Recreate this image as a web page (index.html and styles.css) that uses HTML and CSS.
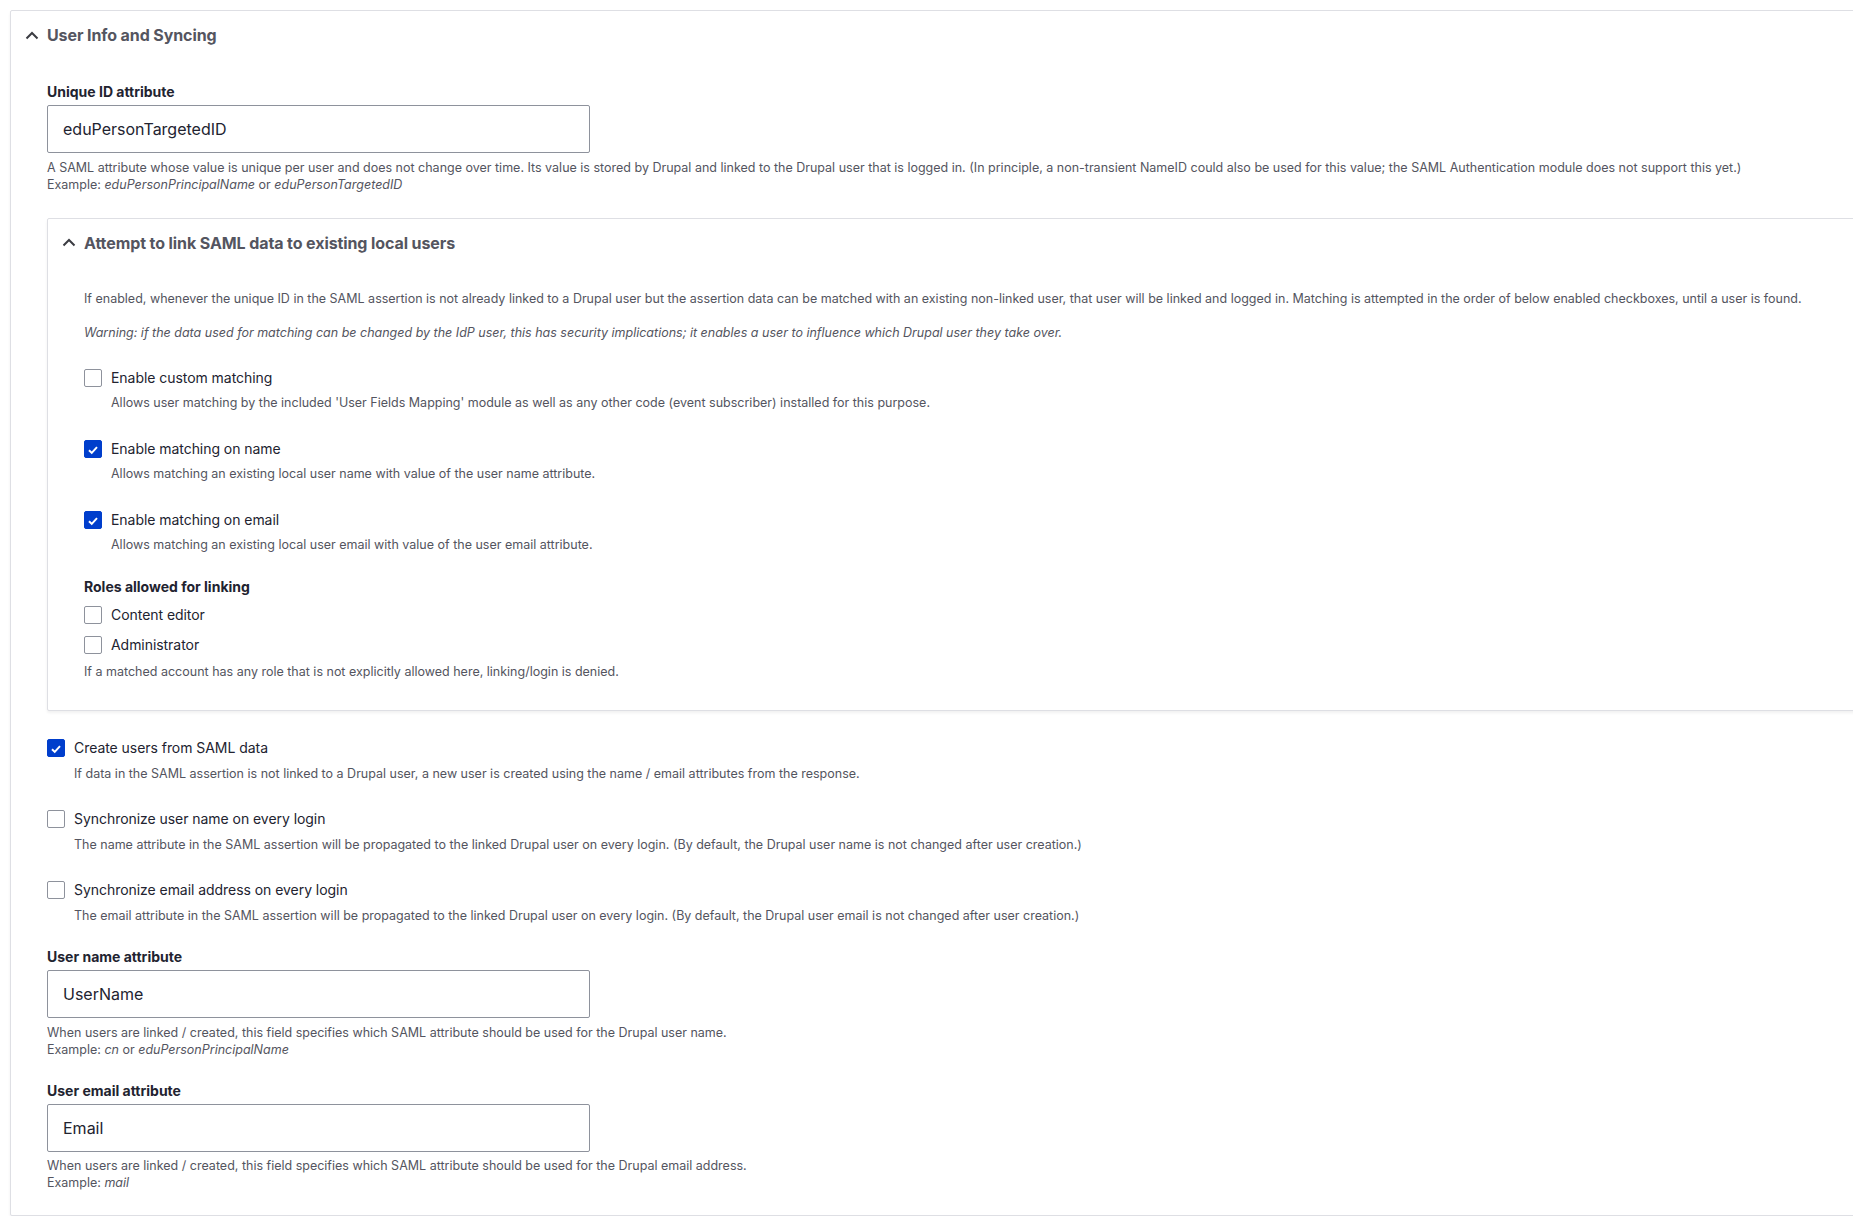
FILE: index.html
```html
<!DOCTYPE html>
<html lang="en">
<head>
<meta charset="utf-8">
<title>User Info and Syncing</title>
<link rel="stylesheet" href="styles.css">
</head>
<body>
<div class="details outer">
  <div class="summary">
    <svg class="chev" width="14" height="9" viewBox="0 0 14 9"><path d="M1.5 7.5 L7 2 L12.5 7.5" fill="none" stroke="#3b3c42" stroke-width="2"/></svg>
    <span class="summary-title">User Info and Syncing</span>
  </div>
  <div class="content outer-content">
    <div class="field">
      <label class="label">Unique ID attribute</label>
      <div class="input">eduPersonTargetedID</div>
      <div class="desc">A SAML attribute whose value is unique per user and does not change over time. Its value is stored by Drupal and linked to the Drupal user that is logged in. (In principle, a non-transient NameID could also be used for this value; the SAML Authentication module does not support this yet.)<br>Example: <em>eduPersonPrincipalName</em> or <em>eduPersonTargetedID</em></div>
    </div>

    <div class="details inner">
      <div class="summary inner-summary">
        <svg class="chev" width="14" height="9" viewBox="0 0 14 9"><path d="M1.5 7.5 L7 2 L12.5 7.5" fill="none" stroke="#3b3c42" stroke-width="2"/></svg>
        <span class="summary-title">Attempt to link SAML data to existing local users</span>
      </div>
      <div class="content inner-content">
        <p class="desc para">If enabled, whenever the unique ID in the SAML assertion is not already linked to a Drupal user but the assertion data can be matched with an existing non-linked user, that user will be linked and logged in. Matching is attempted in the order of below enabled checkboxes, until a user is found.</p>
        <p class="desc para warn"><em>Warning: if the data used for matching can be changed by the IdP user, this has security implications; it enables a user to influence which Drupal user they take over.</em></p>

        <div class="check-item first">
          <div class="check-row"><span class="box"></span><span class="check-label">Enable custom matching</span></div>
          <div class="desc check-desc">Allows user matching by the included 'User Fields Mapping' module as well as any other code (event subscriber) installed for this purpose.</div>
        </div>
        <div class="check-item">
          <div class="check-row"><span class="box checked"><svg viewBox="0 0 18 18" width="18" height="18"><path d="M4.5 9.2 L7.6 12.2 L13.5 5.8" fill="none" stroke="#fff" stroke-width="2.2"/></svg></span><span class="check-label">Enable matching on name</span></div>
          <div class="desc check-desc">Allows matching an existing local user name with value of the user name attribute.</div>
        </div>
        <div class="check-item">
          <div class="check-row"><span class="box checked"><svg viewBox="0 0 18 18" width="18" height="18"><path d="M4.5 9.2 L7.6 12.2 L13.5 5.8" fill="none" stroke="#fff" stroke-width="2.2"/></svg></span><span class="check-label">Enable matching on email</span></div>
          <div class="desc check-desc">Allows matching an existing local user email with value of the user email attribute.</div>
        </div>

        <div class="roles">
          <div class="label roles-label">Roles allowed for linking</div>
          <div class="check-row role"><span class="box"></span><span class="check-label">Content editor</span></div>
          <div class="check-row role role2"><span class="box"></span><span class="check-label">Administrator</span></div>
          <div class="desc roles-desc">If a matched account has any role that is not explicitly allowed here, linking/login is denied.</div>
        </div>
      </div>
    </div>

    <div class="check-item first-outer">
      <div class="check-row"><span class="box checked"><svg viewBox="0 0 18 18" width="18" height="18"><path d="M4.5 9.2 L7.6 12.2 L13.5 5.8" fill="none" stroke="#fff" stroke-width="2.2"/></svg></span><span class="check-label">Create users from SAML data</span></div>
      <div class="desc check-desc">If data in the SAML assertion is not linked to a Drupal user, a new user is created using the name / email attributes from the response.</div>
    </div>
    <div class="check-item">
      <div class="check-row"><span class="box"></span><span class="check-label">Synchronize user name on every login</span></div>
      <div class="desc check-desc">The name attribute in the SAML assertion will be propagated to the linked Drupal user on every login. (By default, the Drupal user name is not changed after user creation.)</div>
    </div>
    <div class="check-item">
      <div class="check-row"><span class="box"></span><span class="check-label">Synchronize email address on every login</span></div>
      <div class="desc check-desc">The email attribute in the SAML assertion will be propagated to the linked Drupal user on every login. (By default, the Drupal user email is not changed after user creation.)</div>
    </div>

    <div class="field field-gap">
      <label class="label">User name attribute</label>
      <div class="input">UserName</div>
      <div class="desc">When users are linked / created, this field specifies which SAML attribute should be used for the Drupal user name.<br>Example: <em>cn</em> or <em>eduPersonPrincipalName</em></div>
    </div>
    <div class="field field-gap2">
      <label class="label">User email attribute</label>
      <div class="input">Email</div>
      <div class="desc">When users are linked / created, this field specifies which SAML attribute should be used for the Drupal email address.<br>Example: <em>mail</em></div>
    </div>
  </div>
</div>
</body>
</html>
```

FILE: styles.css
```css
html, body {
  margin: 0;
  padding: 0;
  background: #fff;
  overflow: hidden;
}
body {
  font-family: Inter, "Liberation Sans", sans-serif;
  color: #222330;
  padding: 10px 0 0 10px;
}
.details {
  border: 1px solid #dedfe4;
  border-radius: 2px;
  background: #fff;
  box-shadow: 0 2px 3px rgba(0, 0, 0, 0.06);
}
.outer {
  width: 1900px;
  padding-bottom: 24px;
}
.summary {
  display: flex;
  align-items: center;
  height: 24px;
  padding: 12px 0 12px 14px;
}
.chev {
  flex: none;
  margin-right: 8px;
}
.summary-title {
  font-size: 16px;
  font-weight: 700;
  line-height: 24px;
  letter-spacing: -0.1px;
  color: #545560;
}
.outer-content {
  padding: 23px 0 0 36px;
}
.label {
  display: block;
  font-size: 14px;
  font-weight: 700;
  line-height: 20px;
  color: #222330;
}
.input {
  margin-top: 3px;
  box-sizing: border-box;
  width: 543px;
  height: 48px;
  border: 1px solid #8e929c;
  border-radius: 2px;
  padding: 0 15px;
  display: flex;
  align-items: center;
  font-size: 16px;
  color: #222330;
}
.desc {
  font-size: 12.5px;
  line-height: 17px;
  color: #545560;
  margin-top: 5px;
}
.inner {
  margin-top: 25px;
  padding-bottom: 30px;
}
.inner-summary {
  padding: 12px 0 0 14px;
}
.inner-content {
  padding: 35px 0 0 36px;
}
.para {
  margin: 0;
}
.para.warn {
  margin-top: 17px;
}
.check-item {
  margin-top: 27.5px;
}
.check-item.first {
  margin-top: 27px;
}
.check-row {
  display: flex;
  align-items: center;
  height: 20px;
}
.box {
  box-sizing: border-box;
  width: 18px;
  height: 18px;
  border: 1px solid #8e929c;
  border-radius: 2px;
  margin-right: 9px;
  flex: none;
  display: flex;
}
.box.checked {
  background: #003ecc;
  border-color: #003ecc;
}
.check-label {
  font-size: 14px;
  line-height: 20px;
  letter-spacing: -0.05px;
  color: #222330;
}
.check-desc {
  margin-top: 6.5px;
  padding-left: 27px;
}
.roles {
  margin-top: 23.5px;
}
.role {
  margin-top: 8px;
}
.role2 {
  margin-top: 10px;
}
.roles-desc {
  margin-top: 8.5px;
}
.check-item.first-outer {
  margin-top: 27px;
}
.field-gap {
  margin-top: 23.5px;
}
.field-gap2 {
  margin-top: 23px;
}
.field .desc {
  margin-top: 5.5px;
}
```
